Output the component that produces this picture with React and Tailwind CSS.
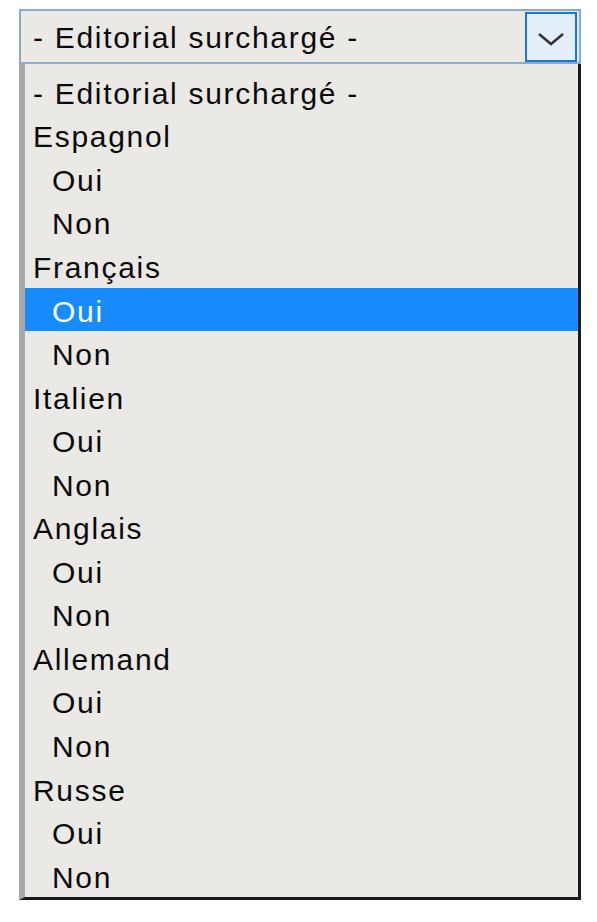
import React from "react";

const options = [
  { label: "- Editorial surchargé -", indent: false },
  { label: "Espagnol", indent: false },
  { label: "Oui", indent: true },
  { label: "Non", indent: true },
  { label: "Français", indent: false },
  { label: "Oui", indent: true, selected: true },
  { label: "Non", indent: true },
  { label: "Italien", indent: false },
  { label: "Oui", indent: true },
  { label: "Non", indent: true },
  { label: "Anglais", indent: false },
  { label: "Oui", indent: true },
  { label: "Non", indent: true },
  { label: "Allemand", indent: false },
  { label: "Oui", indent: true },
  { label: "Non", indent: true },
  { label: "Russe", indent: false },
  { label: "Oui", indent: true },
  { label: "Non", indent: true },
];

export default function App() {
  return (
    <div className="w-[597px] h-[922px] bg-white pt-[9px] pl-[19px] font-['Liberation_Sans',Arial,sans-serif] text-[30px] tracking-[1.7px] text-[#0a0a0a]">
      <div className="w-[562px]">
        {/* Closed select */}
        <div className="h-[55px] border-2 border-[#8aabcb] bg-[#ebe9e5] flex items-center justify-between pl-[12px] pr-[2px]">
          <span className="leading-none pt-[2px]">- Editorial surchargé -</span>
          <div className="w-[52px] h-[50px] border-2 border-[#1776d8] bg-[#e4effa] flex items-center justify-center pt-[4px]">
            <svg width="28" height="14" viewBox="0 0 28 14">
              <polyline points="2,2 14,12 26,2" fill="none" stroke="#333" strokeWidth="2.5" />
            </svg>
          </div>
        </div>

        {/* Open list */}
        <div className="bg-[#ebe9e5] border-l-[6px] border-l-[#a9a9a9] border-r-[3px] border-r-[#1a1a1a] border-b-[3px] border-b-[#1a1a1a] pt-[6px]">
          {options.map((o, i) => (
            <div
              key={i}
              className={
                "h-[43.55px] flex items-center leading-none pt-[4px] " +
                (o.indent ? "pl-[27px] " : "pl-[8px] ") +
                (o.selected ? "bg-[#168cff] text-white" : "")
              }
            >
              {o.label}
            </div>
          ))}
        </div>
      </div>
    </div>
  );
}
